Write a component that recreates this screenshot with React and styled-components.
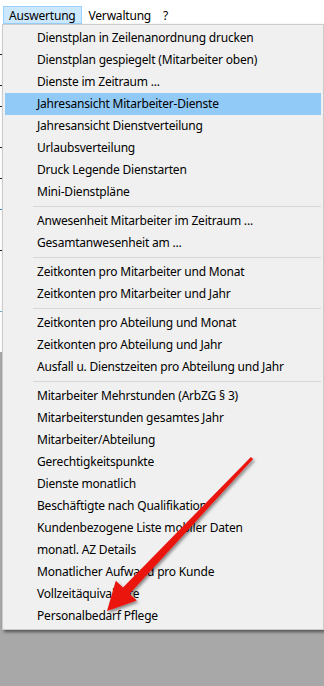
import React from "react";
import styled, { createGlobalStyle } from "styled-components";

const GlobalStyle = createGlobalStyle`
  html, body { margin: 0; padding: 0; }
  body { background: #a8a8a8; font-family: "Noto Sans", "Segoe UI", sans-serif; }
`;

const Screen = styled.div`
  position: relative;
  width: 324px;
  height: 686px;
  overflow: hidden;
  background: #a8a8a8;
  display: flex;
  flex-direction: column;
  font-family: "Noto Sans", "Segoe UI", sans-serif;
  font-size: 12px;
  letter-spacing: -0.2px;
  color: #000;
`;

const Window = styled.div`
  background: #fff;
  display: flex;
  flex-direction: column;
`;

const TitleStrip = styled.div`
  height: 6px;
  background: #fff;
`;

const MenuBar = styled.div`
  height: 18px;
  display: flex;
  align-items: stretch;
  padding-left: 3px;
`;

const BarItem = styled.div`
  display: flex;
  align-items: center;
  padding: 1px ${(p) => p.$pad || 6}px 0;
  border: 1px solid ${(p) => (p.$active ? "#99d1ff" : "transparent")};
  background: ${(p) => (p.$active ? "#cce8ff" : "transparent")};
  line-height: 16px;
  white-space: nowrap;
`;

const WindowContent = styled.div`
  height: 328px;
  background: #fff;
  display: flex;
  flex-direction: column;
`;

const Tick = styled.div`
  height: 1px;
  width: 2px;
  margin-top: ${(p) => p.$gap}px;
  background: ${(p) => p.$color || "#222"};
`;

const Desktop = styled.div`
  flex: 1;
  background: #a8a8a8;
`;

const Dropdown = styled.div`
  position: absolute;
  top: 24px;
  left: 2px;
  width: 322px;
  box-sizing: border-box;
  background: #f0f0f0;
  border: 1px solid #cccccc;
  padding: 2px;
  box-shadow: 2px 2px 3px rgba(0, 0, 0, 0.5);
  display: flex;
  flex-direction: column;
`;

const Item = styled.div`
  height: 22px;
  line-height: 22px;
  padding-left: 32px;
  white-space: nowrap;
  background: ${(p) => (p.$hot ? "#91c9f7" : "transparent")};
`;

const Separator = styled.div`
  height: 7px;
  display: flex;
  align-items: center;
  padding-left: 28px;
  &::after {
    content: "";
    flex: 1;
    height: 1px;
    background: #d7d7d7;
  }
`;

const ArrowLayer = styled.svg`
  position: absolute;
  left: 0;
  top: 0;
  width: 324px;
  height: 686px;
  pointer-events: none;
  overflow: visible;
`;

const groups = [
  [
    "Dienstplan in Zeilenanordnung drucken",
    "Dienstplan gespiegelt (Mitarbeiter oben)",
    "Dienste im Zeitraum ...",
    "Jahresansicht Mitarbeiter-Dienste",
    "Jahresansicht Dienstverteilung",
    "Urlaubsverteilung",
    "Druck Legende Dienstarten",
    "Mini-Dienstpläne",
  ],
  ["Anwesenheit Mitarbeiter im Zeitraum ...", "Gesamtanwesenheit am ..."],
  ["Zeitkonten pro Mitarbeiter und Monat", "Zeitkonten pro Mitarbeiter und Jahr"],
  [
    "Zeitkonten pro Abteilung und Monat",
    "Zeitkonten pro Abteilung und Jahr",
    "Ausfall u. Dienstzeiten pro Abteilung und Jahr",
  ],
  [
    "Mitarbeiter Mehrstunden (ArbZG § 3)",
    "Mitarbeiterstunden gesamtes Jahr",
    "Mitarbeiter/Abteilung",
    "Gerechtigkeitspunkte",
    "Dienste monatlich",
    "Beschäftigte nach Qualifikation",
    "Kundenbezogene Liste mobiler Daten",
    "monatl. AZ Details",
    "Monatlicher Aufwand pro Kunde",
    "Vollzeitäquivalente",
    "Personalbedarf Pflege",
  ],
];

const HOT = "Jahresansicht Mitarbeiter-Dienste";

export default function App() {
  return (
    <>
      <GlobalStyle />
      <Screen>
        <Window>
          <TitleStrip />
          <MenuBar>
            <BarItem $active $pad={5}>Auswertung</BarItem>
            <BarItem $pad={6}>Verwaltung</BarItem>
            <BarItem $pad={4}>?</BarItem>
          </MenuBar>
          <WindowContent>
            <Tick $gap={30} />
            <Tick $gap={30} />
            <Tick $gap={20} />
            <Tick $gap={40} />
            <Tick $gap={30} />
            <Tick $gap={30} $color="#3a8fd0" />
            <Tick $gap={40} />
            <Tick $gap={60} $color="#6aa9d8" />
          </WindowContent>
        </Window>
        <Desktop />
        <Dropdown>
          {groups.map((g, gi) => (
            <React.Fragment key={gi}>
              {gi > 0 && <Separator />}
              {g.map((label) => (
                <Item key={label} $hot={label === HOT}>
                  {label}
                </Item>
              ))}
            </React.Fragment>
          ))}
        </Dropdown>
        <ArrowLayer viewBox="0 0 324 686">
          <defs>
            <filter id="arrowShadow" x="-20%" y="-20%" width="140%" height="140%">
              <feDropShadow dx="1.5" dy="2" stdDeviation="1.5" floodColor="#000" floodOpacity="0.45" />
            </filter>
          </defs>
          <polygon
            filter="url(#arrowShadow)"
            fill="#ea1410"
            points="253.1,459 129.6,593.8 136.8,600.6 107,611 115.8,580.8 123,587.6 250.9,457"
          />
        </ArrowLayer>
      </Screen>
    </>
  );
}
